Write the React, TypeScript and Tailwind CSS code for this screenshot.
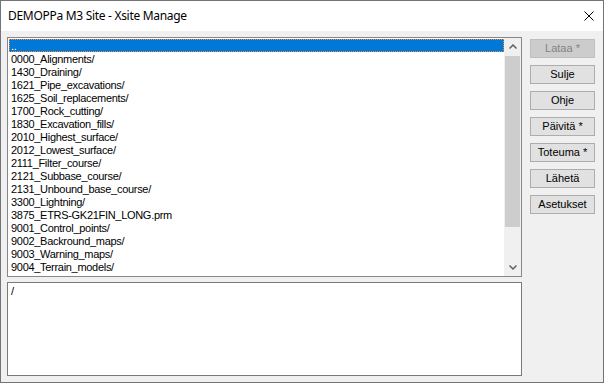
import React from "react";

const items = [
  "0000_Alignments/",
  "1430_Draining/",
  "1621_Pipe_excavations/",
  "1625_Soil_replacements/",
  "1700_Rock_cutting/",
  "1830_Excavation_fills/",
  "2010_Highest_surface/",
  "2012_Lowest_surface/",
  "2111_Filter_course/",
  "2121_Subbase_course/",
  "2131_Unbound_base_course/",
  "3300_Lightning/",
  "3875_ETRS-GK21FIN_LONG.prm",
  "9001_Control_points/",
  "9002_Backround_maps/",
  "9003_Warning_maps/",
  "9004_Terrain_models/",
];

const buttons = ["Sulje", "Ohje", "Päivitä *", "Toteuma *", "Lähetä", "Asetukset"];

function Chevron({ up }: { up?: boolean }) {
  return (
    <svg width="8" height="5" viewBox="0 0 8 5">
      {up ? (
        <polyline points="0.5,4.5 4,1 7.5,4.5" fill="none" stroke="#606060" strokeWidth="1.5" />
      ) : (
        <polyline points="0.5,0.5 4,4 7.5,0.5" fill="none" stroke="#606060" strokeWidth="1.5" />
      )}
    </svg>
  );
}

export default function App() {
  const font = { fontFamily: '"Liberation Sans", Arial, sans-serif' };
  return (
    <div className="w-[604px] h-[383px] border border-[#747474] bg-[#f0f0f0] flex flex-col" style={font}>
      <div className="h-[30px] bg-white flex items-center justify-between pl-[7px] pr-[9px]">
        <span className="text-[12px] text-black tracking-[-0.3px]" style={{ fontFamily: '"Noto Sans", sans-serif' }}>
          DEMOPPa M3 Site - Xsite Manage
        </span>
        <svg width="10" height="10" viewBox="0 0 10 10">
          <path d="M0.5 0.5 L9.5 9.5 M9.5 0.5 L0.5 9.5" stroke="#000" strokeWidth="1" />
        </svg>
      </div>
      <div className="flex pl-[6px] pt-[6px]">
        <div className="w-[515px] flex flex-col gap-[5px]">
          <div className="h-[240px] border border-[#828790] bg-white flex">
            <div className="w-[496px] pl-[1px] pt-[1px] flex flex-col text-[11px] leading-[15px] tracking-[-0.3px] text-black">
              <div className="h-[13px] bg-[#0078d7] text-white pl-[2px] outline outline-1 outline-dotted outline-[#ff8728] -outline-offset-1">..</div>
              {items.map((t) => (
                <div key={t} className="h-[13px] pl-[2px] whitespace-nowrap">
                  {t}
                </div>
              ))}
            </div>
            <div className="w-[17px] flex flex-col bg-[#f0f0f0]">
              <div className="h-[17px] flex items-center justify-center">
                <Chevron up />
              </div>
              <div className="flex-1 px-[1px] pt-[1px]">
                <div className="h-[171px] bg-[#cdcdcd]" />
              </div>
              <div className="h-[17px] flex items-center justify-center">
                <Chevron />
              </div>
            </div>
          </div>
          <div className="h-[94px] border border-[#7a7a7a] bg-white text-[11px] leading-[13px] pl-[3px] pt-[2px]">/</div>
        </div>
        <div className="ml-[8px] mt-[2px] w-[65px] flex flex-col gap-[7px] text-[11px]">
          <div className="h-[19px] border border-[#bfbfbf] bg-[#cccccc] text-[#838383] flex items-center justify-center">
            Lataa *
          </div>
          {buttons.map((b) => (
            <div key={b} className="h-[19px] border border-[#adadad] bg-[#e1e1e1] text-black flex items-center justify-center">
              {b}
            </div>
          ))}
        </div>
      </div>
    </div>
  );
}
